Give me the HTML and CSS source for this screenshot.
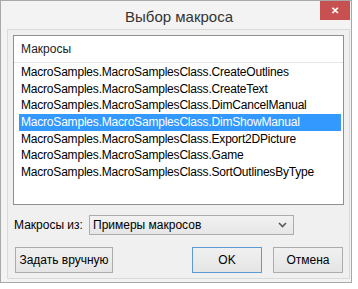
FILE: index.html
```html
<!DOCTYPE html>
<html lang="ru">
<head>
  <meta charset="UTF-8">
  <title>Выбор макроса</title>
  <link rel="stylesheet" href="styles.css">
</head>
<body>
  <div class="window">
    <div class="titlebar">
      <div class="title">Выбор макроса</div>
      <div class="close">&#x2715;</div>
    </div>
    <div class="client">
      <div class="listbox">
        <div class="list-header">Макросы</div>
        <div class="items">
          <div class="item">MacroSamples.MacroSamplesClass.CreateOutlines</div>
          <div class="item">MacroSamples.MacroSamplesClass.CreateText</div>
          <div class="item">MacroSamples.MacroSamplesClass.DimCancelManual</div>
          <div class="item selected">MacroSamples.MacroSamplesClass.DimShowManual</div>
          <div class="item">MacroSamples.MacroSamplesClass.Export2DPicture</div>
          <div class="item">MacroSamples.MacroSamplesClass.Game</div>
          <div class="item">MacroSamples.MacroSamplesClass.SortOutlinesByType</div>
        </div>
      </div>
      <div class="source-row">
        <span class="label">Макросы из:</span>
        <div class="combo">
          <span>Примеры макросов</span>
          <svg width="9" height="6" viewBox="0 0 9 6"><path d="M1 1 L4.5 4.5 L8 1" fill="none" stroke="#5a5a5a" stroke-width="1.6"/></svg>
        </div>
      </div>
      <div class="buttons">
        <button class="btn manual">Задать вручную</button>
        <button class="btn ok">OK</button>
        <button class="btn cancel">Отмена</button>
      </div>
    </div>
  </div>
</body>
</html>
```

FILE: styles.css
```css
body {
  margin: 0;
  background: #fff;
  font-family: 'Liberation Sans', Arial, sans-serif;
  font-size: 12px;
  color: #000;
}
.window {
  box-sizing: border-box;
  width: 352px;
  height: 283px;
  border: 1px solid #a8a8a8;
  background: #f3f3f3;
  display: flex;
  flex-direction: column;
}
.titlebar {
  height: 28px;
  display: flex;
  align-items: flex-start;
}
.title {
  flex: 1;
  padding-left: 37px;
  text-align: center;
  font-size: 15px;
  line-height: 32px;
  color: #333;
}
.close {
  width: 30px;
  height: 19px;
  margin-right: 1px;
  background: #c75050;
  color: #fff;
  font-size: 10px;
  font-weight: bold;
  text-align: center;
  line-height: 19px;
}
.client {
  box-sizing: border-box;
  height: 250px;
  margin: 0 1px 0 6px;
  border: 1px solid #dadada;
  background: #f0f0f0;
  padding: 5px 5px 5px 5px;
  display: flex;
  flex-direction: column;
}
.listbox {
  box-sizing: border-box;
  height: 172px;
  border: 1px solid #8e8f8f;
  background: #fff;
}
.list-header {
  height: 26px;
  line-height: 27px;
  padding-left: 7px;
  border-bottom: 1px solid #e5e5e5;
  color: #222;
}
.items {
  padding-top: 1px;
}
.item {
  height: 16.7px;
  line-height: 16.7px;
  margin: 0 2px 0 5px;
  padding-left: 2px;
  white-space: nowrap;
  letter-spacing: -0.2px;
}
.item.selected {
  background: #3399ff;
  color: #fff;
}
.source-row {
  display: flex;
  align-items: center;
  margin-top: 10px;
  height: 20px;
}
.label {
  width: 75px;
  padding-left: 1px;
}
.combo {
  box-sizing: border-box;
  width: 205px;
  height: 20px;
  border: 1px solid #acacac;
  background: linear-gradient(#f2f2f2, #e6e6e6);
  display: flex;
  align-items: center;
  justify-content: space-between;
  padding: 0 6px 0 3px;
}
.buttons {
  display: flex;
  margin-top: 12px;
  padding-left: 2px;
}
.btn {
  box-sizing: border-box;
  height: 26px;
  border: 1px solid #acacac;
  background: linear-gradient(#f0f0f0, #e5e5e5);
  font-family: inherit;
  font-size: 12px;
  color: #000;
  padding: 0;
}
.manual {
  width: 98px;
}
.ok {
  width: 70px;
  margin-left: auto;
  border-color: #5b9bd5;
}
.cancel {
  width: 70px;
  margin-left: 11px;
  margin-right: 1px;
}
```
